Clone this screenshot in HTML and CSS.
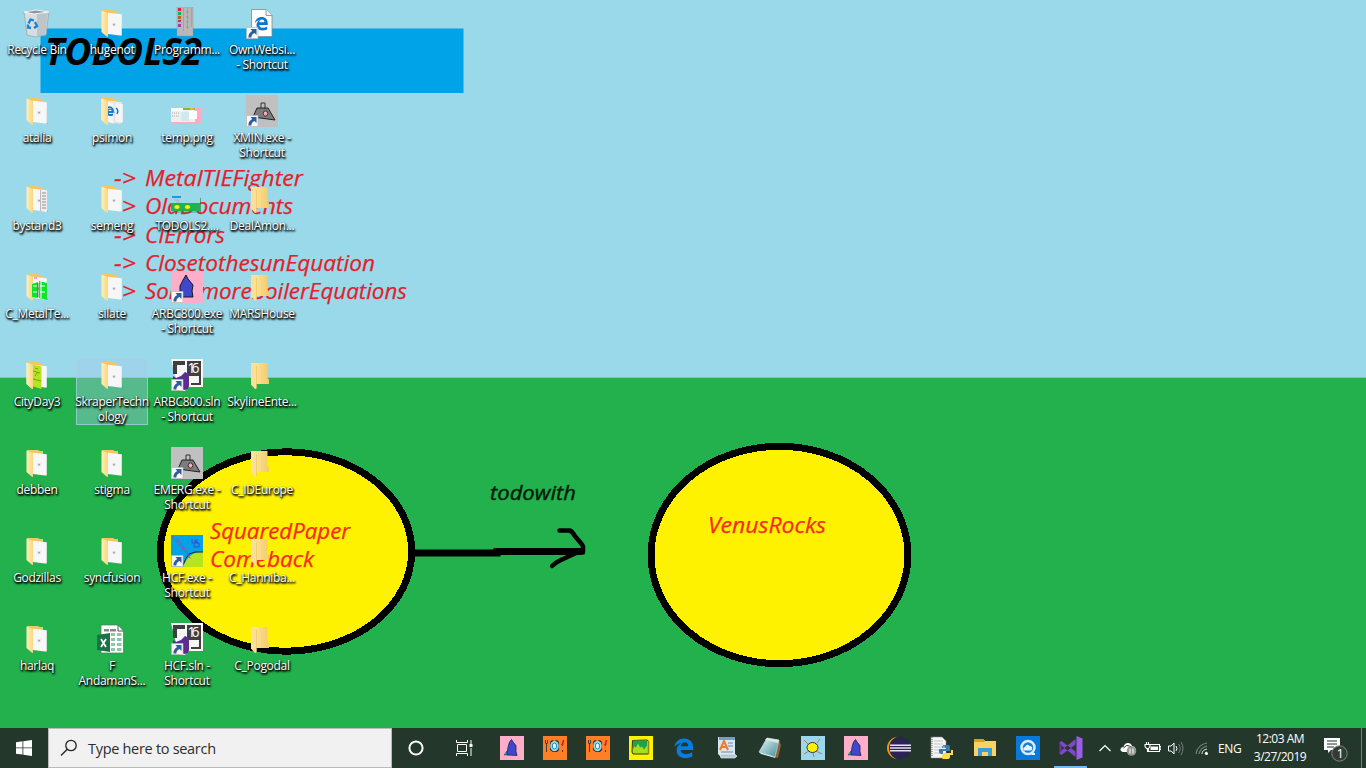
FILE: index.html
```html
<!DOCTYPE html>
<html lang="en">
<head>
<meta charset="utf-8">
<title>Desktop</title>
<link rel="stylesheet" href="styles.css">
</head>
<body>
<svg class="defs" width="0" height="0">
  <defs>
    <linearGradient id="gold" x1="0" x2="1"><stop offset="0" stop-color="#ffe9a8"/><stop offset="1" stop-color="#f3cb68"/></linearGradient>
    <linearGradient id="flap" x1="0" x2="1"><stop offset="0" stop-color="#fff0b8"/><stop offset="1" stop-color="#f9d681"/></linearGradient>
    <linearGradient id="glass" x1="0" x2="1" y2="1"><stop offset="0" stop-color="#eefafa"/><stop offset="1" stop-color="#3c8c9b"/></linearGradient>
    <symbol id="arrow" viewBox="0 0 32 32"><path d="M.5 20.500h11.500v11H.5z" fill="#f8f8f8" stroke="#b8b8b8" stroke-width=".7"/><path d="M4.500 22h6v6l-2-2q-3 1-3.200 4.500H2.500q-.5-4 3.700-6.500z" fill="#2c5d9c"/></symbol>
    <symbol id="front" viewBox="0 0 32 32"><path d="M5.500 3.500 12 6v23.500l-.8.600-5.700-5z" fill="url(#flap)"/></symbol>
    <symbol id="file" viewBox="0 0 32 32"><path d="M6 3h11l1.500 1H22v10H8z" fill="#f1c765"/><path d="M26 12v15l1.500 2H24z" fill="#0002"/><path d="M12 5.700 25.800 7.200v21.500L12 27z" fill="#f7f7f7"/><path d="M16.500 16h3v3h-3z" fill="#ddd"/><path d="M17.500 17h1.200v1.200h-1.200z" fill="#888"/><use href="#front"/></symbol>
    <symbol id="folder" viewBox="0 0 32 32"><path d="M5 4h16.500v15l1.500 1.500v4.500H10z" fill="url(#gold)"/><path d="M5 4l4.500 1.500q1 1 1 2V29.500L9 30l-4-4.500z" fill="#fbe09a"/><path d="M10.500 7v22" stroke="#e9bd5b" stroke-width=".6"/></symbol>
    <symbol id="e" viewBox="0 0 24 24"><path d="M1.500 11C2.500 5 6.500 1.500 12.200 1.500c6 0 9.800 4 9.800 10v2.700H8.300c.2 3 2.500 4.500 5.700 4.500 2.600 0 4.800-.7 7-2v4.700c-2.300 1.200-5 1.700-7.700 1.700C7.500 23.100 4 19.500 4 14.500c0-3.600 1.900-6.400 5-7.800C6.200 6.700 3.700 8.300 1.500 11zm7-1h8.200c0-3-1.500-4.400-4-4.400-2.300 0-3.800 1.500-4.200 4.400z"/></symbol>
    <symbol id="ship" viewBox="0 0 32 32"><path d="M0 0h32v32H0z" fill="#c0c0c0"/><path d="M11 13h11l7 12-22-3z" fill="#7c7c7c" stroke="#222"/><path d="M15 13V8h4v6" fill="none" stroke="#333"/><ellipse cx="19.500" cy="18.500" rx="2.300" ry="2.600" fill="#f5a9bb" stroke="#222" stroke-width=".8"/><use href="#arrow"/></symbol>
    <symbol id="tower" viewBox="0 0 24 24"><path d="M0 0h24v24H0z" fill="#ffaec9"/><path d="M4 19l3-4v4z" fill="#00c8d8" stroke="#222" stroke-width=".5"/><path d="M7 19l1-8 1.500-5 2-2.500 2 3 2.500 3v6l1 4z" fill="#3f48cc" stroke="#171740" stroke-width=".7"/></symbol>
    <symbol id="sln" viewBox="0 0 32 32"><path d="M0 0h32v28H17l-3 4H8z" fill="#f7f7f7"/><path d="M2 2h12v4H6v9H2zM16 2h14v15H16z" fill="#3f3f42"/><path d="M20 26h10v-9h-2v7h-8z" fill="#3f3f42"/><path d="M2 17l3 2 5-2 4-4 4 2v12q-1 4-5 4l-5-4-6-3z" fill="#5c2d91"/><text x="16.600" y="14" class="sln-number" textLength="12">16</text><use href="#arrow"/></symbol>
    <symbol id="food" viewBox="0 0 24 24"><path d="M0 0h24v24H0z" fill="#ff7f27"/><path d="M2.500 4v3q1 2 2 0V4M3.500 7v9M19.500 14v2" fill="none" stroke="#333" stroke-width=".9"/><path d="M20.500 4l-1 5-1-1" fill="none" stroke="#c31522" stroke-width="1.300"/><path d="M7 6l2-2 2 1 3-1 2 2v8l-2 2h-4l-3-2z" fill="#302b28"/><ellipse cx="11.500" cy="10" rx="4.300" ry="5.200" fill="#99d9ea"/><ellipse cx="11.500" cy="10" rx="2.200" ry="3" fill="#e4f8ff" stroke="#168db9"/></symbol>
  </defs>
</svg>
<main class="desktop">
  <svg class="wallpaper" viewBox="0 0 1366 728">
    <path d="M0 0h1366v377.500H0z" fill="#99d9ea"/><path d="M0 377.500h1366v350.500H0z" fill="#22b14c"/>
    <path d="M40.500 28.500h423v64.500h-423z" fill="#00a2e8"/>
    <text x="45" y="65" class="heading" textLength="157" lengthAdjust="spacingAndGlyphs">TODOLS2</text>
    <g class="notes red">
      <text x="114" y="186" textLength="22" lengthAdjust="spacingAndGlyphs">-&gt;</text><text x="145" y="186" textLength="158" lengthAdjust="spacingAndGlyphs">MetalTIEFighter</text>
      <text x="114" y="214" textLength="22" lengthAdjust="spacingAndGlyphs">-&gt;</text><text x="145" y="214" textLength="148" lengthAdjust="spacingAndGlyphs">OldDocuments</text>
      <text x="114" y="243" textLength="22" lengthAdjust="spacingAndGlyphs">-&gt;</text><text x="145" y="243" textLength="80" lengthAdjust="spacingAndGlyphs">CIErrors</text>
      <text x="114" y="271" textLength="22" lengthAdjust="spacingAndGlyphs">-&gt;</text><text x="145" y="271" textLength="230" lengthAdjust="spacingAndGlyphs">ClosetothesunEquation</text>
      <text x="114" y="299" textLength="22" lengthAdjust="spacingAndGlyphs">-&gt;</text><text x="145" y="299" textLength="262" lengthAdjust="spacingAndGlyphs">SomemoreBoilerEquations</text>
    </g>
    <g fill="#fff200" stroke="#000" stroke-width="7" shape-rendering="crispEdges"><ellipse cx="286" cy="551.500" rx="125.700" ry="99.700"/><ellipse cx="779.500" cy="555" rx="128.500" ry="108.700"/></g>
    <path d="M414 553h83v-1.500h85" fill="none" stroke="#000" stroke-width="7"/>
    <path d="M559.500 530.500h10q3 1 5 5l7.500 9 1 2v6M581 551l-7 3q-11 5-15 7-4 2-7 5" class="arrowhead"/>
    <g class="notes circle-text"><text x="210" y="539" textLength="140" lengthAdjust="spacingAndGlyphs">SquaredPaper</text><text x="210" y="567" textLength="104" lengthAdjust="spacingAndGlyphs">Comeback</text><text x="708" y="533" textLength="118" lengthAdjust="spacingAndGlyphs">VenusRocks</text></g>
    <text x="490" y="500" class="notes relation" textLength="86" lengthAdjust="spacingAndGlyphs">todowith</text>
  </svg>
  <section class="icons">
    <div class="item"><svg viewBox="0 0 32 32"><path d="M3 5l8-2 17 2-3 23-11 2-8-2z" fill="#d5dde0" stroke="#9ba8ae" stroke-width=".8"/><path d="M3 5l10 2 15-2-13-2z" fill="#8b999f" stroke="#f4f6f7"/><path d="M16 7l11-1-3 22-8 2z" fill="#aeb9be" opacity=".65"/><g fill="none" stroke="#1683d8" stroke-width="2.300"><path d="M7.500 16.500l2-4 3.500 1M14 15l2 4-3 2M10 21l-3-.5v-3"/></g></svg><span>Recycle Bin</span></div>
    <div class="item"><svg viewBox="0 0 32 32"><use href="#file"/></svg><span>atalia</span></div>
    <div class="item"><svg viewBox="0 0 32 32"><use href="#file"/><path d="M20 7l6 1v21l-6-1z" fill="#eee"/><path d="M21 10h4m-4 3h4m-4 3h4m-4 3h4m-4 3h4m-4 3h4" stroke="#777" stroke-width=".8"/><path d="M19.500 7v21" stroke="#bbb"/></svg><span>bystand3</span></div>
    <div class="item"><svg viewBox="0 0 32 32"><use href="#file"/><path d="M11 13l6-2v16l-6-1zM18 10l8 2v17l-8-2z" fill="#0ce52b"/><path d="M12 15h4m-4 6h4m3-6h5m-5 6h5M20 10v17" stroke="#fff"/><path d="M13 6h3v2h-3z" fill="#f3a2e4"/><path d="M17 12v14" stroke="#333" stroke-width=".6"/></svg><span>C_MetalTe...</span></div>
    <div class="item"><svg viewBox="0 0 32 32"><use href="#file"/><path d="M11 5.500l9.500 2V30L11 27z" fill="#b5e61d"/><path d="M12 12l7 2M12 20l8 2M14 9l3 1m-3 7l3-4" stroke="#779e17"/><use href="#front"/></svg><span>CityDay3</span></div>
    <div class="item"><svg viewBox="0 0 32 32"><use href="#file"/></svg><span>debben</span></div>
    <div class="item"><svg viewBox="0 0 32 32"><use href="#file"/></svg><span>Godzillas</span></div>
    <div class="item"><svg viewBox="0 0 32 32"><use href="#file"/></svg><span>harlaq</span></div>

    <div class="item"><svg viewBox="0 0 32 32"><use href="#file"/></svg><span>hugenot</span></div>
    <div class="item"><svg viewBox="0 0 32 32"><use href="#file"/><path d="M19 7l8 2v19l-8-1zM11 6l7 2v21l-7-2z" fill="#f6f6f6" stroke="#ccc" stroke-width=".5"/><use href="#e" x="10" y="11" width="8" height="12" preserveAspectRatio="none" fill="#0877d4"/><path d="M11 17h6v-2q-1-3-3.500-3t-3 5q1 4 6 3" fill="none" stroke="#0877d4" stroke-width="1.500"/><path d="M20 13q3 2 1 6" fill="none" stroke="#0877d4" stroke-width="1.500"/><use href="#front"/></svg><span>psimon</span></div>
    <div class="item"><svg viewBox="0 0 32 32"><use href="#file"/></svg><span>semeng</span></div>
    <div class="item"><svg viewBox="0 0 32 32"><use href="#file"/></svg><span>silate</span></div>
    <div class="item selected"><svg viewBox="0 0 32 32"><use href="#file"/></svg><span>SkraperTechn<br>ology</span></div>
    <div class="item"><svg viewBox="0 0 32 32"><use href="#file"/></svg><span>stigma</span></div>
    <div class="item"><svg viewBox="0 0 32 32"><use href="#file"/></svg><span>syncfusion</span></div>
    <div class="item"><svg viewBox="0 0 32 32"><path d="M5 2h17l5.500 6v22H5z" fill="#fff" stroke="#477b61" stroke-width=".7"/><path d="M22 2v6h5.500" fill="none" stroke="#555"/><path d="M8 6h5v2.500H8zM14 6h6v2.500h-6z" fill="#888"/><path d="M15 10h4v3h-4zm6 0h4.500v3H21zm-6 5h4v3h-4zm6 0h4.500v3H21zm-6 5h4v3h-4zm6 0h4.500v3H21zm-6 5h4v3h-4zm6 0h4.500v3H21z" fill="#8bc7a5"/><path d="M1 12l13-2v19L1 27z" fill="#1c7145"/><path d="M5 16l5 8m0-8-5 8" stroke="#fff" stroke-width="1.700"/></svg><span>F<br>AndamanS...</span></div>

    <div class="item"><svg viewBox="0 0 32 32"><path d="M6 0h16v29H6z" fill="#b8b8b8" stroke="#999" stroke-width=".5"/><path d="M7 1h3v3H7z" fill="#e91e3a"/><path d="M7 5h3v3H7z" fill="#15af56"/><path d="M7 9h3v3H7z" fill="#b56421"/><path d="M7 13h3v2H7z" fill="#d52c38"/><path d="M7 17h3v3H7z" fill="#a839b4"/><path d="M12.500 1v23M16.500 1v21M20.500 1v19" stroke="#999" stroke-width=".7"/><path d="M15.500 5h2m-2 5h2m-2 5h2m-2 5h2" stroke="#888"/></svg><span>Programm...</span></div>
    <div class="item"><svg viewBox="0 0 32 32"><path d="M0 13h30v16H0z" fill="#eef0ee"/><path d="M0 13h12v3H0z" fill="#fff"/><path d="M12 13h12v2H12z" fill="#75bf45"/><path d="M19 13h4v2h-4z" fill="#efb716"/><path d="M24 13h6v16H0v-2h24z" fill="#ffa9c4"/><path d="M10 17h8v9h-8z" fill="#cfeaf1"/><path d="M18 16h8v8h-8z" fill="#fff"/><path d="M1 18h7M1 21h7" stroke="#aaa" stroke-dasharray="1 1"/></svg><span>temp.png</span></div>
    <div class="item"><svg viewBox="0 0 32 32"><path d="M0 13h29v15H0z" fill="#99d9ea"/><path d="M0 20h29v8H0z" fill="#22b14c"/><path d="M1 13h9v2H1z" fill="#169fe0"/><path d="M3 17h5m-3 2h4" stroke="#d88d9d" stroke-width=".6"/><ellipse cx="6" cy="24" rx="2.700" ry="2" fill="#fff200"/><ellipse cx="16.500" cy="24" rx="2.700" ry="2" fill="#fff200"/><path d="M29.500 15v14H1" fill="none" stroke="#396c50" stroke-width=".6"/></svg><span>TODOLS2....</span></div>
    <div class="item"><svg viewBox="0 0 32 32"><path d="M0 0h32v32H0z" fill="#ffaec9"/><path d="M9 26V15l3-6 3-5 2 4 5 6-1 6 1 6z" fill="#3f48cc" stroke="#171720"/><use href="#arrow"/></svg><span>ARBC800.exe<br>- Shortcut</span></div>
    <div class="item"><svg viewBox="0 0 32 32"><use href="#sln"/></svg><span>ARBC800.sln<br>- Shortcut</span></div>
    <div class="item"><svg viewBox="0 0 32 32"><use href="#ship"/></svg><span>EMERG.exe -<br>Shortcut</span></div>
    <div class="item"><svg viewBox="0 0 32 32"><path d="M0 0h32v32H0z" fill="#00a2e8"/><path d="M12 32q6-16 20-15v15z" fill="#b5e61d"/><path d="M12 30q3-8 6-11 5-3 14-2" fill="none" stroke="#222"/><path d="M1 1l19 23M6 3l12 17" stroke="#a34a9a" stroke-dasharray="4 1"/><path d="M21 4v4h3V5l2 3V4m-3 5v3h5V8h-5" fill="none" stroke="#3f48cc"/><use href="#arrow"/></svg><span>HCF.exe -<br>Shortcut</span></div>
    <div class="item"><svg viewBox="0 0 32 32"><use href="#sln"/></svg><span>HCF.sln -<br>Shortcut</span></div>

    <div class="item"><svg viewBox="0 0 32 32"><path d="M5.500 2.500H20l6 6V29.500H5.500z" fill="#fff" stroke="#888" stroke-width=".8"/><path d="M20 2.500v6h6" fill="#eee" stroke="#888" stroke-width=".8"/><use href="#e" x="8" y="8" width="15" height="17" fill="#0877d4"/><use href="#arrow"/></svg><span>OwnWebsi...<br>- Shortcut</span></div>
    <div class="item"><svg viewBox="0 0 32 32"><use href="#ship"/></svg><span>XMIN.exe -<br>Shortcut</span></div>
    <div class="item"><svg viewBox="0 0 32 32"><use href="#folder"/></svg><span>DealAmon...</span></div>
    <div class="item"><svg viewBox="0 0 32 32"><use href="#folder"/></svg><span>MARSHouse</span></div>
    <div class="item"><svg viewBox="0 0 32 32"><use href="#folder"/></svg><span>SkylineEnte...</span></div>
    <div class="item"><svg viewBox="0 0 32 32"><use href="#folder"/></svg><span>C_IDEurope</span></div>
    <div class="item"><svg viewBox="0 0 32 32"><use href="#folder"/></svg><span>C_Hanniba...</span></div>
    <div class="item"><svg viewBox="0 0 32 32"><use href="#folder"/></svg><span>C_Pogodal</span></div>
  </section>
</main>
<footer class="taskbar">
  <div class="start"><svg width="16" height="16" viewBox="0 0 16 16"><path d="M0 2.200 6.500 1.300v6.200H0zM7.300 1.200 16 0v7.500H7.300zM0 8.300h6.500v6.300L0 13.700zM7.300 8.300H16V16l-8.700-1.200z" fill="#fff"/></svg></div>
  <div class="search"><svg width="18" height="18" viewBox="0 0 18 18"><circle cx="11" cy="6.500" r="5.200"/><path d="M7.300 10.200 1 16.500"/></svg><span>Type here to search</span></div>
  <div class="control"><svg width="16" height="16" viewBox="0 0 16 16"><circle cx="8" cy="8" r="6.600" fill="none" stroke="#fff" stroke-width="2"/></svg></div>
  <div class="control"><svg width="17" height="16" viewBox="0 0 17 16"><path d="M1.500 4.500h9v7h-9zM.5 0v2.500h11V0M.5 16v-2.500h11V16M15 0v4M15 8v8" fill="none" stroke="#fff"/><path d="M13.500 4h3v3h-3z" fill="#fff"/></svg></div>
  <div class="apps">
    <div class="app"><svg viewBox="0 0 24 24"><use href="#tower"/></svg></div>
    <div class="app"><svg viewBox="0 0 24 24"><use href="#food"/></svg></div>
    <div class="app"><svg viewBox="0 0 24 24"><use href="#food"/></svg></div>
    <div class="app"><svg viewBox="0 0 24 24"><path d="M0 0h24v24H0z" fill="#fff200"/><path d="M3.500 4.500 18 4l1.500 1v13H4l-1-2z" fill="#a8df1c" stroke="#332"/><path d="M4 4.500h14v5l-3 4-2-3-2 1-2-4-2 4-2-1-1 3z" fill="#22a14c"/><path d="M19.500 5v13" stroke="#8f8915" stroke-width="1.500"/></svg></div>
    <div class="app"><svg viewBox="0 0 24 24"><use href="#e" x="1" y="0" width="22" height="24" fill="#0b7cdc"/></svg></div>
    <div class="app"><svg viewBox="0 0 24 24"><path d="M3 1h17v17l2 3H6l-3-3z" fill="#d8e6f1"/><path d="M4 1h16v3H4z" fill="#7a9dbb"/><path d="M5 14 9 5l4 9M6.500 11h5" fill="none" stroke="#f17b24" stroke-width="2"/><path d="M13 7h5m-5 3h5M6 16h12" stroke="#658ab2"/><path d="M5 18h14l3 2-2 2H6z" fill="#b7c7d5" stroke="#f8fafb" stroke-width=".6"/></svg></div>
    <div class="app"><svg viewBox="0 0 24 24"><path d="M21 4l2 5-3 13-4-1z" fill="#8e6335"/><path d="M9 2l12 2-4 17L1 16z" fill="url(#glass)" stroke="#badbde" stroke-width=".7"/><path d="M9 2l12 2-1 3L7 4z" fill="#dae5e5"/><path d="M1 16l16 5 .5 1L3 18z" fill="#e2f0f0"/></svg></div>
    <div class="app"><svg viewBox="0 0 24 24"><path d="M0 0h24v24H0z" fill="#99d9ea"/><path d="M3 4l5 5M16 7l3-4M3 18l5-3M15 15l6 3M12 17l1 4" stroke="#b7677a" stroke-width=".9"/><ellipse cx="11.500" cy="11.500" rx="5.500" ry="5" fill="#fff200" stroke="#333"/></svg></div>
    <div class="app"><svg viewBox="0 0 24 24"><use href="#tower"/></svg></div>
    <div class="app"><svg viewBox="0 0 24 24"><circle cx="11" cy="12" r="11" fill="#f7941e"/><circle cx="13.500" cy="12" r="11.500" fill="#20352a"/><circle cx="13" cy="12" r="10.500" fill="#2c2255"/><path d="M3 9.300h21M3 12h21M3 14.700h21" stroke="#e7e2f2" stroke-width="1.500"/></svg></div>
    <div class="app"><svg viewBox="0 0 24 24"><path d="M1 1h11l4 4v17H1z" fill="#f5f5f5" stroke="#888" stroke-width=".5"/><path d="M2 1v20" stroke="#555" stroke-dasharray="1 1"/><path d="M4 5h9m-9 3h9m-9 3h9m-9 3h5m-5 3h5" stroke="#c3c3c3"/><path d="M13 9h5q2 0 2 2v4h-7v3h-2q-2 0-2-2v-3h7v-1h-4z" fill="#397ba9"/><path d="M13 23h5q2 0 2-2v-2h3v-5h-2v3h-7q-2 0-2 2v3z" fill="#ffdb4c"/><circle cx="14" cy="11" r=".7" fill="#fff"/></svg></div>
    <div class="app"><svg viewBox="0 0 24 24"><path d="M1 3h9l2 2h11v15H1z" fill="#ffd064"/><path d="M1 3h9l2 2-1 1H1z" fill="#dca01c"/><path d="M5 12h14v8h-4v-4H9v4H5z" fill="#3b9bdc"/></svg></div>
    <div class="app"><svg viewBox="0 0 24 24"><path d="M0 0h24v24H0z" fill="#0878d9"/><circle cx="12" cy="11.500" r="6.500" fill="#1580d8" stroke="#d8edff" stroke-width="2.500"/><path d="M14 17h5v2h-3z" fill="#e8f4ff"/><path d="M8 14.500q-2-2.500 1-3.500 2-4 4.500-1 3.500 0 2.500 3.500l-1 1z" fill="#e8f4ff"/></svg></div>
    <div class="app active"><svg viewBox="0 0 24 24"><path d="M17.500 0 23.500 2.500v19l-6 2.500z" fill="#9b5ce8"/><path d="M.5 6.500 2.500 5l14 10.500V21L.5 8zM.5 17.500 2.500 19l14-10.500V3L.5 16z" fill="#8048c8"/><path d="M.5 6.500 2.500 8v8l-2 1.500z" fill="#65369d"/></svg></div>
  </div>
  <div class="tray">
    <svg class="chevron" viewBox="0 0 14 20"><path d="M1.500 13 7 7.500l5.500 5.500" fill="none" stroke="#fff" stroke-width="1.200"/></svg>
    <svg class="cloud" viewBox="0 0 18 20"><path d="M3 14q-3-1-2.500-3 .5-2 3-2 1-4 4.500-4 3 0 4 3 3 0 4 4l-3 2z" fill="#fff"/><path d="M3.500 10q3-4 6-2l4 2" fill="none" stroke="#20352a"/><circle cx="11.500" cy="13" r="4.800" fill="#929792"/><path d="M10 10.500v5m3-5v5" stroke="#fff"/></svg>
    <svg class="battery" viewBox="0 0 17 20"><path d="M6 6.500h9.500v7h-11V11M15.500 8.500H17v3h-1.500M1 6.500h5v2l-1.500 2h-2L1 8.500zM2.500 4v2m2-2v2M3.500 10v3.500h2" fill="none" stroke="#fff" stroke-width="1.100"/><path d="M6.500 8.500h7.500V12H6.500z" fill="#fff"/></svg>
    <svg class="volume" viewBox="0 0 18 20"><path d="M1.500 8h2.700L7 5v11L4.200 13H1.500zM9 8q2 2.500 0 5" fill="none" stroke="#fff"/><path d="M11.500 6q3.500 4.500 0 9M14 4q4 6 0 13" fill="none" stroke="#75837a"/></svg>
    <svg class="wifi" viewBox="0 0 16 20"><g fill="none" stroke="#75837a" stroke-width="1.200"><path d="M2 16Q3 7 13 5M5 16q1-6 8-8"/></g><path d="M8 16q0-4 5-5M11 16q0-2 2-2" fill="none" stroke="#ddd"/><circle cx="12.500" cy="15.500" r="1.500" fill="#fff"/></svg>
    <span class="language">ENG</span>
    <div class="clock"><span>12:03 AM</span><span>3/27/2019</span></div>
    <svg class="notification" viewBox="0 0 26 28"><path d="M1 4h16v12H8l-3 3v-3H1z" fill="#fff"/><path d="M4 7h10M4 10h10M4 13h7" stroke="#20352a"/><circle cx="16.500" cy="19.500" r="7.700" fill="#343b37" stroke="#7f8782"/><text x="13.500" y="24" class="count">1</text></svg>
    <div class="peek"></div>
  </div>
</footer>
</body>
</html>
```
FILE: styles.css
```css
* { box-sizing: border-box; }
body { margin: 0; width: 1366px; height: 768px; overflow: hidden; display: flex; flex-direction: column; font-family: "Open Sans", "Noto Sans", sans-serif; }
svg { display: block; }
.defs { position: absolute; }
.desktop { height: 728px; display: grid; }
.wallpaper, .icons { grid-area: 1 / 1; }
.wallpaper { width: 1366px; height: 728px; }
.heading { font: italic 700 37px "Open Sans", sans-serif; fill: #000; }
.notes { font: italic 22px "Open Sans", sans-serif; }
.red { fill: #e51d2c; stroke: #e51d2c; stroke-width: .25px; }
.circle-text { fill: #f52b20; stroke: #f52b20; stroke-width: .25px; }
.relation { font-size: 20px; fill: #04190a; stroke: #04190a; stroke-width: .4px; }
.arrowhead { fill: none; stroke: #000; stroke-width: 4.5px; stroke-linejoin: round; stroke-linecap: round; }
.icons { position: relative; display: grid; grid-template-columns: repeat(4, 75px); grid-template-rows: repeat(8, 88px); grid-auto-flow: column; align-content: start; }
.item { width: 74px; height: 67px; margin-top: 6px; padding-top: 1px; display: flex; flex-direction: column; align-items: center; text-align: center; }
.item svg { width: 32px; height: 32px; flex: none; }
.item span { margin-top: 3px; color: #fff; font-size: 12px; line-height: 15px; letter-spacing: -.3px; white-space: nowrap; text-shadow: 0 1px 2px #000, 1px 1px 2px #000, 1px 2px 2px #000a; }
.selected { width: 72px; margin-left: 1px; background: #a8c8ee66; border: 1px solid #aad5e6aa; padding-top: 0; }
.sln-number { font: 14px "Open Sans", sans-serif; fill: #fff; }
.taskbar { height: 40px; background: #23382b; display: flex; color: #fff; }
.start { width: 48px; display: grid; place-items: center; }
.search { width: 344px; height: 40px; background: #f1f1f1; border: 1px solid #b9b9b9; display: flex; align-items: center; gap: 10px; padding-left: 11px; color: #2d2d2d; font-size: 14.5px; letter-spacing: -.3px; }
.search svg { fill: none; stroke: #222; stroke-width: 1.3; }
.control { width: 48px; display: grid; place-items: center; }
.apps { display: flex; margin-left: 2px; width: 602px; }
.app { width: 43px; height: 40px; display: flex; justify-content: center; align-items: center; }
.app svg { width: 24px; height: 24px; }
.active { background: linear-gradient(#76b9ed, #76b9ed) center bottom / 33px 2px no-repeat; }
.tray { flex: 1; display: flex; align-items: center; padding-left: 6px; }
.tray svg { flex: none; }
.chevron { width: 14px; height: 20px; margin-right: 8px; }
.cloud { width: 18px; height: 20px; margin-right: 6px; }
.battery { width: 17px; height: 20px; margin-right: 6px; }
.volume { width: 18px; height: 20px; margin-right: 9px; }
.wifi { width: 16px; height: 20px; margin-right: 8px; }
.language { width: 26px; font-size: 12px; letter-spacing: -.4px; }
.clock { width: 72px; display: flex; flex-direction: column; align-items: center; font-size: 12px; line-height: 18px; letter-spacing: -.5px; white-space: nowrap; }
.notification { width: 26px; height: 28px; margin-left: 7px; }
.count { font: 13px "Open Sans", sans-serif; fill: #fff; }
.peek { margin-left: auto; margin-right: 4px; width: 1px; height: 40px; background: #758078; }
```
